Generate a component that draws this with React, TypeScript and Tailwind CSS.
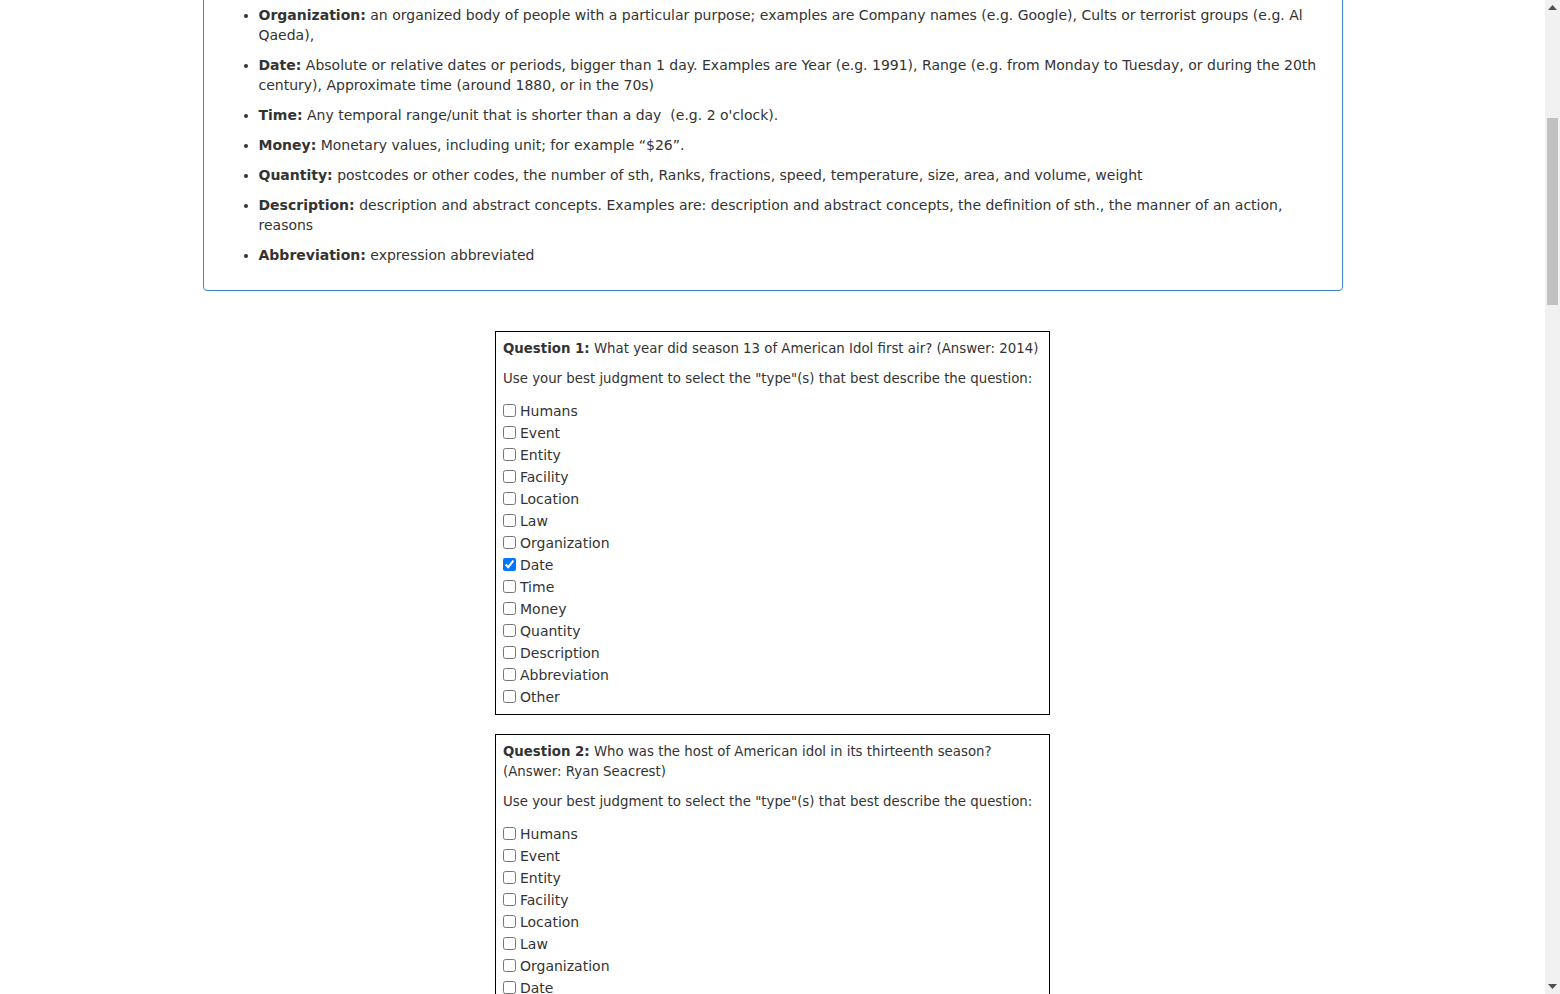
import { useLayoutEffect, useRef } from "react";

const TYPES = [
  "Humans",
  "Event",
  "Entity",
  "Facility",
  "Location",
  "Law",
  "Organization",
  "Date",
  "Time",
  "Money",
  "Quantity",
  "Description",
  "Abbreviation",
  "Other",
];

const QUESTIONS = [
  { q: "What year did season 13 of American Idol first air?", a: "2014", checked: ["Date"] },
  { q: "Who was the host of American idol in its thirteenth season?", a: "Ryan Seacrest", checked: [] },
  { q: "Which network broadcast the thirteenth season of American Idol?", a: "Fox", checked: [] },
  { q: "Who won the thirteenth season of American Idol?", a: "Caleb Johnson", checked: [] },
  { q: "How many judges were on the panel in season 13?", a: "3", checked: [] },
  { q: "Which judge returned to the panel for season 13?", a: "Jennifer Lopez", checked: [] },
  { q: "Where was the season 13 finale held?", a: "Nokia Theatre", checked: [] },
  { q: "What was the name of the runner-up of season 13?", a: "Jena Irene", checked: [] },
  { q: "When did the season 13 finale air?", a: "May 21, 2014", checked: [] },
  { q: "Who replaced Randy Jackson as a judge?", a: "Harry Connick Jr.", checked: [] },
];

const topDefs: { label: string; text: string }[] = [
  { label: "Humans", text: "any individual person, group of people or title of a person; examples are names of famous people, occupations, nationalities, religious or political groups" },
  { label: "Event", text: "Named hurricanes, battles, wars, sports events, attacks, festivals, ceremonies and other happenings that take place at a certain time" },
  { label: "Entity", text: "animals, plants, objects, products, works of art, languages, diseases, food, colors, vehicles, sports, substances, techniques and other things" },
  { label: "Facility", text: "buildings, airports, highways, bridges, stadiums and other man-made structures" },
  { label: "Location", text: "Geographical or political places; examples are countries, cities, states, mountains, rivers, oceans, planets, addresses and other locations" },
  { label: "Law", text: "Named documents made into laws, treaties, acts and regulations" },
];

function Def({ label, children }: { label: string; children: React.ReactNode }) {
  return (
    <li className="mb-[10px]">
      <b>{label}:</b> {children}
    </li>
  );
}

function QuestionBox({ n, q, a, checked }: { n: number; q: string; a: string; checked: string[] }) {
  return (
    <div className="mx-auto mb-[19px] w-[555px] border border-black p-[7px]">
      <p className="mb-[10px] text-[13.33px]">
        <b>Question {n}:</b> {q} (Answer: {a})
      </p>
      <p className="mb-[10px] text-[13.33px]">
        Use your best judgment to select the "type"(s) that best describe the question:
      </p>
      <div className="text-[14px]">
        {TYPES.map((t) => (
          <label key={t} className="flex h-[22px] items-center pt-[1px]">
            <input
              type="checkbox"
              defaultChecked={checked.includes(t)}
              className="m-0 mr-[4px] mb-[1px] h-[13px] w-[13px]"
            />
            {t}
          </label>
        ))}
      </div>
    </div>
  );
}

// the browser's scrollbar as it shows in the capture
function FakeScrollbar() {
  return (
    <div className="fixed top-0 right-0 flex h-[994px] w-[15px] flex-col bg-[#f1f1f1]">
      <div className="flex h-[15px] items-center justify-center">
        <svg width="9" height="5" viewBox="0 0 9 5">
          <path d="M4.5 0 L9 5 L0 5 Z" fill="#505050" />
        </svg>
      </div>
      <div className="flex-1 px-[2px] pt-[103px]">
        <div className="h-[187px] bg-[#c1c1c1]" />
      </div>
      <div className="flex h-[15px] items-center justify-center">
        <svg width="9" height="5" viewBox="0 0 9 5">
          <path d="M0 0 L9 0 L4.5 5 Z" fill="#505050" />
        </svg>
      </div>
    </div>
  );
}

export default function App() {
  const orgRef = useRef<HTMLLIElement>(null);

  useLayoutEffect(() => {
    const el = orgRef.current;
    if (!el) return;
    const top = el.getBoundingClientRect().top + window.scrollY;
    window.scrollTo(0, top - 5);
  }, []);

  return (
    <div
      className="bg-white pr-[15px] pb-[40px] text-[14px] leading-[20px] text-[#333]"
      style={{ fontFamily: '"DejaVu Sans", sans-serif' }}
    >
      <div className="mx-auto w-[1140px] pt-[20px]">
        <h3 className="mb-[10px] text-[24px] leading-[26px] font-medium">Question Type Classification</h3>
        <p className="mb-[20px]">
          Please read each question carefully and decide which categories describe the kind of answer that the
          question is asking for.
        </p>

        {/* Instructions */}
        <div className="rounded-[4px] border border-[#3a8ad0] p-[15px]">
          <p className="mb-[10px]">
            Each question below comes with its answer. Based on the question and the answer, select one or more of
            the following types. If none of them fit, choose "Other".
          </p>
          <ul className="list-disc pl-[40px]">
            {topDefs.map((d) => (
              <Def key={d.label} label={d.label}>
                {d.text}
              </Def>
            ))}
            <li ref={orgRef} className="mb-[10px]">
              <b>Organization:</b> an organized body of people with a particular purpose; examples are Company names
              (e.g. Google), Cults or terrorist groups (e.g. Al Qaeda),
            </li>
            <Def label="Date">
              Absolute or relative dates or periods, bigger than 1 day. Examples are Year (e.g. 1991), Range (e.g. from
              Monday to Tuesday, or during the 20th century), Approximate time (around 1880, or in the 70s)
            </Def>
            <Def label="Time">Any temporal range/unit that is shorter than a day{"\u00a0"} (e.g. 2 o'clock).</Def>
            <Def label="Money">Monetary values, including unit; for example “$26”.</Def>
            <Def label="Quantity">
              postcodes or other codes, the number of sth, Ranks, fractions, speed, temperature, size, area, and
              volume, weight
            </Def>
            <Def label="Description">
              description and abstract concepts. Examples are: description and abstract concepts, the definition of
              sth., the manner of an action, reasons
            </Def>
            <Def label="Abbreviation">expression abbreviated</Def>
          </ul>
        </div>
      </div>

      <div className="mt-[40px]">
        {QUESTIONS.map((x, i) => (
          <QuestionBox key={i} n={i + 1} q={x.q} a={x.a} checked={x.checked} />
        ))}
      </div>

      <FakeScrollbar />
    </div>
  );
}
